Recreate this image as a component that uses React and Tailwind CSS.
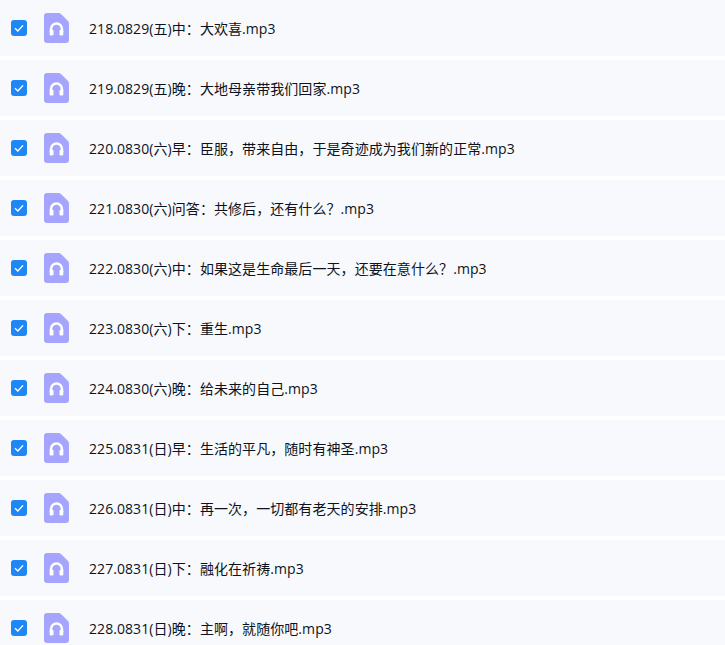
const names = [
  "218.0829(五)中：大欢喜.mp3",
  "219.0829(五)晚：大地母亲带我们回家.mp3",
  "220.0830(六)早：臣服，带来自由，于是奇迹成为我们新的正常.mp3",
  "221.0830(六)问答：共修后，还有什么？.mp3",
  "222.0830(六)中：如果这是生命最后一天，还要在意什么？.mp3",
  "223.0830(六)下：重生.mp3",
  "224.0830(六)晚：给未来的自己.mp3",
  "225.0831(日)早：生活的平凡，随时有神圣.mp3",
  "226.0831(日)中：再一次，一切都有老天的安排.mp3",
  "227.0831(日)下：融化在祈祷.mp3",
  "228.0831(日)晚：主啊，就随你吧.mp3",
];

function Check() {
  return (
    <div className="flex h-4 w-4 shrink-0 items-center justify-center rounded-[3px] bg-[#1e87f5]">
      <svg width="12" height="12" viewBox="0 0 12 12" fill="none">
        <path d="M2 6.2 L4.9 9 L10 3.4" stroke="#fff" strokeWidth="1.4" />
      </svg>
    </div>
  );
}

function FileIcon() {
  return (
    <svg width="25" height="30" viewBox="0 0 25 30" className="shrink-0">
      <path d="M3 0 H14.5 Q16 0 17 1 L24 8 Q25 9 25 10.5 V27 A3 3 0 0 1 22 30 H3 A3 3 0 0 1 0 27 V3 A3 3 0 0 1 3 0 Z" fill="#a5a4ff" />
      <path d="M7 19 V16 A5.5 5.5 0 0 1 18 16 V19" fill="none" stroke="#fff" strokeWidth="2.5" />
      <rect x="5.7" y="16.8" width="3.8" height="5.7" rx="1.3" fill="#fff" />
      <rect x="15.5" y="16.8" width="3.8" height="5.7" rx="1.3" fill="#fff" />
    </svg>
  );
}

export default function App() {
  return (
    <div className="flex h-[645px] w-[725px] flex-col gap-1 overflow-hidden bg-white font-['Open_Sans','Noto_Sans_CJK_SC',sans-serif]">
      {names.map((n) => (
        <div key={n} className="flex h-14 shrink-0 items-center bg-[#f7f9fc] pl-[11px]">
          <Check />
          <div className="ml-[17px] flex">
            <FileIcon />
          </div>
          <span className="ml-5 mt-0.5 text-sm tracking-[0.07px] text-[#0d1220]">{n}</span>
        </div>
      ))}
    </div>
  );
}
